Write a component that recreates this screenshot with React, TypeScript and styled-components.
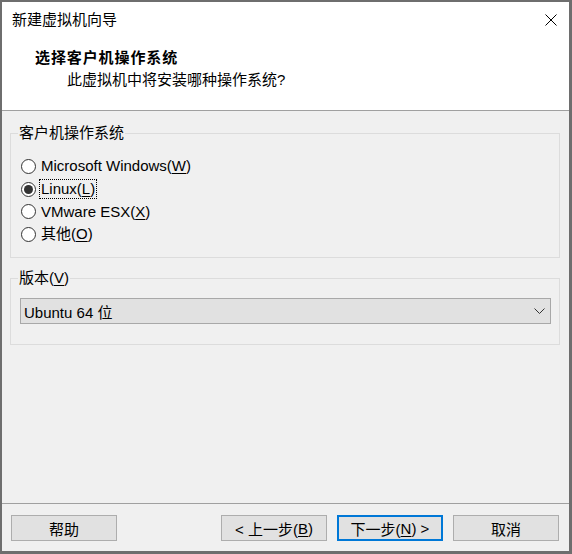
import React from "react";
import styled, { createGlobalStyle } from "styled-components";

const GlobalStyle = createGlobalStyle`
  html, body {
    margin: 0;
    padding: 0;
    background: #ffffff;
  }
  * {
    box-sizing: border-box;
  }
`;

const osOptions = [
  { label: "Microsoft Windows", key: "W" },
  { label: "Linux", key: "L" },
  { label: "VMware ESX", key: "X" },
  { label: "其他", key: "O" },
];

const App: React.FC = () => {
  const selected = "Linux";
  return (
    <>
      <GlobalStyle />
      <Window>
        <Header>
          <TitleBar>
            <Title>新建虚拟机向导</Title>
            <CloseIcon viewBox="0 0 12 12" width="12" height="12">
              <path d="M0.5 0.5 L11.5 11.5 M11.5 0.5 L0.5 11.5" stroke="#000" strokeWidth="1" />
            </CloseIcon>
          </TitleBar>
          <Heading>选择客户机操作系统</Heading>
          <SubHeading>此虚拟机中将安装哪种操作系统?</SubHeading>
        </Header>

        <Body>
          <GroupBox>
            <Legend>客户机操作系统</Legend>
            <RadioList>
              {osOptions.map(({ label, key }) => (
                <RadioRow key={key}>
                  <RadioMark $checked={label === selected} />
                  <RadioLabel $focused={label === selected}>
                    {label}(<u>{key}</u>)
                  </RadioLabel>
                </RadioRow>
              ))}
            </RadioList>
          </GroupBox>

          <VersionBox>
            <Legend>
              版本(<u>V</u>)
            </Legend>
            <Select>
              <SelectText>Ubuntu 64 位</SelectText>
              <svg viewBox="0 0 11 6" width="11" height="6">
                <polyline points="0.5,0.5 5.5,5.5 10.5,0.5" fill="none" stroke="#333" strokeWidth="1" />
              </svg>
            </Select>
          </VersionBox>
        </Body>

        <Footer>
          <Button>帮助</Button>
          <Spacer />
          <Button>
            &lt; 上一步(<u>B</u>)
          </Button>
          <Button $primary>
            下一步(<u>N</u>) &gt;
          </Button>
          <Button>取消</Button>
        </Footer>
      </Window>
    </>
  );
};

export default App;

const uiFont = `"Liberation Sans", "Noto Sans CJK SC", sans-serif`;

const Window = styled.div`
  width: 572px;
  height: 554px;
  border-style: solid;
  border-color: #6e6e6e;
  border-width: 2px 3px 3px 2px;
  background: #f0f0f0;
  display: flex;
  flex-direction: column;
  font-family: ${uiFont};
  font-size: 15px;
  color: #000;

  u {
    text-decoration: underline;
    text-underline-offset: 2px;
  }
`;

const Header = styled.div`
  height: 109px;
  background: #ffffff;
  border-bottom: 1px solid #a0a0a0;
  display: flex;
  flex-direction: column;
`;

const TitleBar = styled.div`
  height: 36px;
  display: flex;
  align-items: center;
  justify-content: space-between;
  padding: 0 12px 0 10px;
`;

const Title = styled.div`
  line-height: 36px;
`;

const CloseIcon = styled.svg`
  display: block;
`;

const Heading = styled.div`
  margin-top: 9px;
  padding-left: 33px;
  line-height: 22px;
  font-weight: bold;
  letter-spacing: 0.9px;
`;

const SubHeading = styled.div`
  padding-left: 65px;
  line-height: 22px;
`;

const Body = styled.div`
  flex: 1;
  padding: 12px 9px 0 8px;
  display: flex;
  flex-direction: column;
  gap: 10px;
`;

const GroupBox = styled.fieldset`
  margin: 0;
  height: 135px;
  border: 1px solid #dcdcdc;
  padding: 12px 9px 0 9px;
  font-family: ${uiFont};
`;

const VersionBox = styled(GroupBox)`
  height: 77px;
  padding: 10px 8px 0 9px;
`;

const Legend = styled.legend`
  margin-left: -2px;
  padding: 0 1px;
  line-height: 20px;
`;

const RadioList = styled.div`
  display: flex;
  flex-direction: column;
  padding-left: 1px;
`;

const RadioRow = styled.div`
  height: 22.7px;
  display: flex;
  align-items: center;
  gap: 4px;
`;

const RadioMark = styled.span<{ $checked?: boolean }>`
  flex: none;
  width: 15px;
  height: 15px;
  border-radius: 50%;
  border: 1px solid #333;
  background: #fff;
  display: flex;
  align-items: center;
  justify-content: center;

  &::after {
    content: "";
    display: ${({ $checked }) => ($checked ? "block" : "none")};
    width: 9px;
    height: 9px;
    border-radius: 50%;
    background: #333;
  }
`;

const RadioLabel = styled.span<{ $focused?: boolean }>`
  line-height: 18px;
  padding: 0 1px;
  outline: ${({ $focused }) => ($focused ? "1px dotted #000" : "none")};
`;

const Select = styled.div`
  height: 26px;
  background: #e1e1e1;
  border: 1px solid #a8a8a8;
  display: flex;
  align-items: center;
  justify-content: space-between;
  padding: 0 5px 0 3px;
`;

const SelectText = styled.span`
  font-family: ${uiFont};
`;

const Footer = styled.div`
  height: 48px;
  border-top: 1px solid #a0a0a0;
  display: flex;
  align-items: flex-start;
  gap: 10px;
  padding: 11px 10px 0 9px;
`;

const Spacer = styled.div`
  flex: 1;
`;

const Button = styled.div<{ $primary?: boolean }>`
  width: 106px;
  height: 26px;
  background: #e1e1e1;
  border: ${({ $primary }) => ($primary ? "2px solid #0078d7" : "1px solid #adadad")};
  display: flex;
  align-items: center;
  justify-content: center;
`;
